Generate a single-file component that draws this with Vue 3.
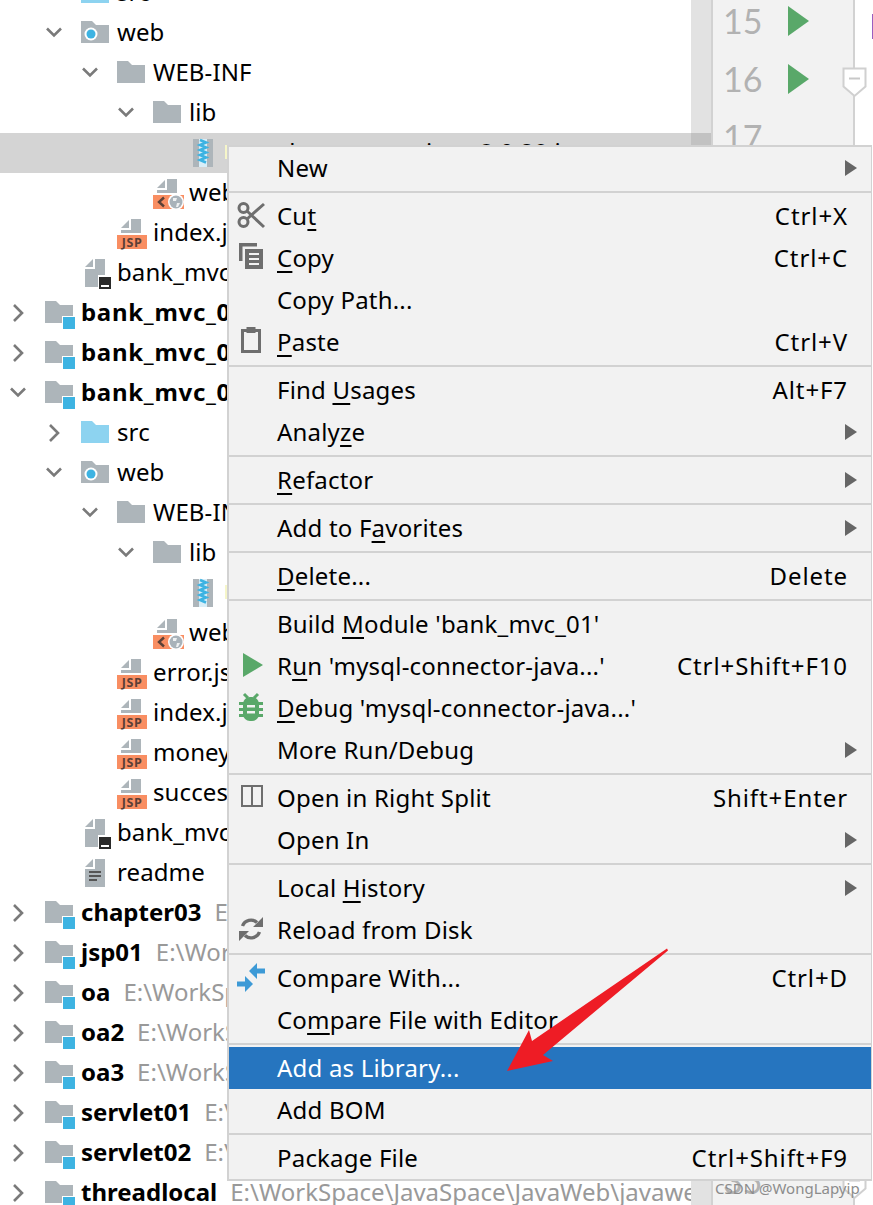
<script setup>
const tree = [
  { lv: 1, chev: 'none', icon: 'src', text: 'src' },
  { lv: 1, chev: 'down', icon: 'web', text: 'web' },
  { lv: 2, chev: 'down', icon: 'folder', text: 'WEB-INF' },
  { lv: 3, chev: 'down', icon: 'folder', text: 'lib' },
  { lv: 4, icon: 'jar', text: 'mysql-connector-java-8.0.29.jar', sel: true, lib: true },
  { lv: 3, icon: 'xml', text: 'web.xml' },
  { lv: 2, icon: 'jsp', text: 'index.jsp' },
  { lv: 1, icon: 'iml', text: 'bank_mvc_01.iml' },
  { lv: 0, chev: 'right', icon: 'project', text: 'bank_mvc_01', bold: true, wide: true },
  { lv: 0, chev: 'right', icon: 'project', text: 'bank_mvc_02', bold: true, wide: true },
  { lv: 0, chev: 'down', icon: 'project', text: 'bank_mvc_03', bold: true, wide: true },
  { lv: 1, chev: 'right', icon: 'src', text: 'src' },
  { lv: 1, chev: 'down', icon: 'web', text: 'web' },
  { lv: 2, chev: 'down', icon: 'folder', text: 'WEB-INF' },
  { lv: 3, chev: 'down', icon: 'folder', text: 'lib' },
  { lv: 4, icon: 'jar', text: 'mysql-connector-java-8.0.29.jar', lib: true },
  { lv: 3, icon: 'xml', text: 'web.xml' },
  { lv: 2, icon: 'jsp', text: 'error.jsp' },
  { lv: 2, icon: 'jsp', text: 'index.jsp' },
  { lv: 2, icon: 'jsp', text: 'money.jsp' },
  { lv: 2, icon: 'jsp', text: 'success.jsp' },
  { lv: 1, icon: 'iml', text: 'bank_mvc_03.iml' },
  { lv: 1, icon: 'readme', text: 'readme' },
  ...['chapter03', 'jsp01', 'oa', 'oa2', 'oa3', 'servlet01', 'servlet02', 'threadlocal'].map((text) => ({
    lv: 0, chev: 'right', icon: 'project', text, bold: true,
    path: 'E:\\WorkSpace\\JavaSpace\\JavaWeb\\javaweb'
  }))
]

const lineNumbers = Array.from({ length: 21 }, (_, i) => i + 15)

const groups = [
  [{ label: 'New', sub: true }],
  [
    { label: 'Cu&t', key: 'Ctrl+X', icon: 'cut' },
    { label: '&Copy', key: 'Ctrl+C', icon: 'copy' },
    { label: 'Copy Path...' },
    { label: '&Paste', key: 'Ctrl+V', icon: 'paste' }
  ],
  [
    { label: 'Find &Usages', key: 'Alt+F7' },
    { label: 'Analy&ze', sub: true }
  ],
  [{ label: '&Refactor', sub: true }],
  [{ label: 'Add to F&avorites', sub: true }],
  [{ label: '&Delete...', key: 'Delete' }],
  [
    { label: "Build &Module 'bank_mvc_01'" },
    { label: "R&un 'mysql-connector-java...'", key: 'Ctrl+Shift+F10', icon: 'run' },
    { label: "&Debug 'mysql-connector-java...'", icon: 'debug' },
    { label: 'More Run/Debug', sub: true }
  ],
  [
    { label: 'Open in Right Split', key: 'Shift+Enter', icon: 'split' },
    { label: 'Open In', sub: true }
  ],
  [
    { label: 'Local &History', sub: true },
    { label: 'Reload from Disk', icon: 'reload' }
  ],
  [
    { label: 'Compare With...', key: 'Ctrl+D', icon: 'compare' },
    { label: 'Co&mpare File with Editor' }
  ],
  [
    { label: 'Add as Library...', active: true },
    { label: 'Add BOM' }
  ],
  [{ label: 'Package File', key: 'Ctrl+Shift+F9' }]
]

function parts(label) {
  const i = label.indexOf('&')
  if (i < 0) return { pre: label, u: '', post: '' }
  return { pre: label.slice(0, i), u: label[i + 1], post: label.slice(i + 2) }
}
</script>

<template>
  <div class="screen">
    <div class="left">
      <div class="tree">
        <div
          v-for="(r, i) in tree"
          :key="i"
          class="row"
          :class="{ sel: r.sel }"
          :style="{ paddingLeft: r.lv * 36 + 'px' }"
        >
          <span class="chev">
            <svg v-if="r.chev === 'down'" width="20" height="14" viewBox="0 0 20 14">
              <path d="M3 2.5 L10 9.5 L17 2.5" />
            </svg>
            <svg v-else-if="r.chev === 'right'" width="14" height="20" viewBox="0 0 14 20">
              <path d="M3 2 L11 10 L3 18" />
            </svg>
          </span>
          <span class="ico">
            <svg width="36" height="40" viewBox="0 0 36 40">
              <template v-if="r.icon === 'project'">
                <path class="g" d="M1 8h11l4 4h13v18H1z" />
                <rect x="18" y="23" width="14" height="14" fill="#fff" />
                <rect x="19" y="24" width="12" height="12" fill="#3db3e2" />
              </template>
              <path v-else-if="r.icon === 'folder'" class="g" d="M1 8h11l4 4h13v18H1z" />
              <path v-else-if="r.icon === 'src'" fill="#8dd3f0" d="M1 8h11l4 4h13v18H1z" />
              <template v-else-if="r.icon === 'web'">
                <path class="g" d="M1 8h11l4 4h13v18H1z" />
                <circle cx="11" cy="21" r="6.5" fill="#fff" />
                <circle cx="11" cy="21" r="4.5" fill="#3db3e2" />
              </template>
              <template v-else-if="r.icon === 'jar'">
                <rect class="g" x="5" y="6" width="20" height="28" />
                <rect x="11" y="6" width="8" height="28" fill="#d8eef8" />
                <path d="M12 7l6 2.5-6 2.5 6 2.5-6 2.5 6 2.5-6 2.5 6 2.5-6 2.5 6 2.5" fill="none" stroke="#3db3e2" stroke-width="2.6" />
              </template>
              <template v-else-if="r.icon === 'xml'">
                <path class="g" d="M5 15l8-8v8zM15 6h10v14H5v-3h10z" />
                <rect x="1" y="22" width="31" height="14" fill="#f98e62" />
                <path d="M12 24.5l-5 4.5 5 4.5" fill="none" stroke="#5b4036" stroke-width="2.4" />
                <circle cx="24" cy="29" r="8" fill="#fff" />
                <circle cx="24" cy="29" r="6.5" fill="#a9b3ba" />
                <path d="M21 25h4l-1 3h-3zM25 30h3l-2 4h-2z" fill="#eef1f2" />
              </template>
              <template v-else-if="r.icon === 'jsp'">
                <path class="g" d="M5 15l8-8v8zM15 6h10v14H5v-3h10z" />
                <rect x="1" y="22" width="30" height="14" fill="#f98e62" />
                <text x="16" y="34" class="jsp" text-anchor="middle">JSP</text>
              </template>
              <template v-else-if="r.icon === 'iml'">
                <path class="g" d="M5 14l8-8v8zM15 6h10v16h-7v12H5V16h10z" />
                <rect x="18" y="23" width="14" height="14" fill="#fff" />
                <rect x="19" y="24" width="12" height="12" fill="#2a2a2a" />
                <rect x="21" y="32" width="8" height="2" fill="#fff" />
              </template>
              <template v-else-if="r.icon === 'readme'">
                <path class="g" d="M5 14l8-8v8zM15 6h10v28H5V16h10z" />
                <path d="M9 18h12v2H9zM9 22h12v2H9zM9 26h8v2H9z" fill="#555" />
              </template>
            </svg>
          </span>
          <span class="name" :class="{ bold: r.bold, lib: r.lib, wide: r.wide }">{{ r.text }}</span>
          <span v-if="r.path" class="path">{{ r.path }}</span>
        </div>
      </div>
      <div class="track">
        <div class="thumb"></div>
      </div>
    </div>

    <div class="gutter">
      <div v-for="n in lineNumbers" :key="n" class="line">
        <span class="num">{{ n }}</span>
        <svg v-if="n === 15 || n === 16" class="play" width="22" height="30" viewBox="0 0 22 30">
          <path d="M0 0L21 15L0 30z" fill="#59a869" />
        </svg>
        <svg v-if="n === 16 || n === 35" class="fold" width="26" height="32" viewBox="0 0 26 32">
          <path d="M1.5 1.5h22v18L12.5 29 1.5 19.5z" fill="#fff" stroke="#d0d0d0" stroke-width="2" />
          <path d="M7 11.5h11" stroke="#c8c8c8" stroke-width="2" />
        </svg>
      </div>
      <div class="wm">CSDN @WongLapyip</div>
    </div>

    <div class="editor"><span class="purple"></span></div>

    <div class="menu">
      <template v-for="(g, gi) in groups" :key="gi">
        <div v-if="gi" class="sep"></div>
        <div v-for="it in g" :key="it.label" class="item" :class="{ active: it.active }">
          <svg v-if="it.icon" class="mi" width="30" height="42" viewBox="0 0 30 42">
            <g v-if="it.icon === 'cut'" fill="none" stroke="#6e6e6e" stroke-width="3">
              <circle cx="7.5" cy="13" r="4.5" />
              <circle cx="7.5" cy="27" r="4.5" />
              <path d="M11 16L28 32M11 24L28 9" />
            </g>
            <g v-else-if="it.icon === 'copy'" fill="#6e6e6e">
              <path d="M3 6h18v3.5H6.5V24H3z" />
              <path fill-rule="evenodd" d="M9 12h18v20H9zM13 16v2h10v-2zM13 21v2h10v-2zM13 26v2h10v-2z" />
            </g>
            <g v-else-if="it.icon === 'paste'" fill="#6e6e6e">
              <rect x="6.5" y="9.5" width="17" height="21" fill="none" stroke="#6e6e6e" stroke-width="3" />
              <rect x="10.5" y="6" width="9" height="6" />
            </g>
            <path v-else-if="it.icon === 'run'" d="M7 8L27 20L7 32z" fill="#59a869" />
            <g v-else-if="it.icon === 'debug'">
              <path d="M8 7l4 4M22 7l-4 4" stroke="#59a869" stroke-width="3" fill="none" />
              <path d="M3 15h5v3H3zM22 15h5v3h-5zM3 21h5v3H3zM22 21h5v3h-5zM3 27h6v3H3zM21 27h6v3h-6z" fill="#59a869" />
              <rect x="7" y="10" width="16" height="24" rx="7" fill="#59a869" />
              <path d="M11 18h8v2.5h-8zM11 24h8v2.5h-8z" fill="#f2f2f2" />
            </g>
            <g v-else-if="it.icon === 'split'" fill="none" stroke="#6e6e6e" stroke-width="2">
              <rect x="6" y="9" width="20" height="20" />
              <path d="M16 9v20" />
            </g>
            <g v-else-if="it.icon === 'reload'">
              <path d="M6.5 17A9 9 0 0 1 21 13.5M23.5 23A9 9 0 0 1 9 26.5" fill="none" stroke="#6e6e6e" stroke-width="3.4" />
              <path d="M27 8v10h-10zM3 32V22h10z" fill="#6e6e6e" />
            </g>
            <g v-else-if="it.icon === 'compare'" fill="#3d9ad6">
              <path d="M13 14l8-8v5.5h8v5h-8V22z" />
              <path d="M17 27l-8-8v5.5H1v5h8V35z" />
            </g>
          </svg>
          <span class="lbl">{{ parts(it.label).pre }}<u v-if="parts(it.label).u">{{ parts(it.label).u }}</u>{{ parts(it.label).post }}</span>
          <span v-if="it.key" class="key">{{ it.key }}</span>
          <svg v-if="it.sub" class="sub" width="12" height="16" viewBox="0 0 12 16">
            <path d="M0 0L12 8L0 16z" fill="#666" />
          </svg>
        </div>
      </template>
    </div>

    <svg class="arrow" width="873" height="1205" viewBox="0 0 873 1205">
      <path d="M667 948.5L668 950.5L543 1055L553 1061L507 1071L529 1030L532 1041z" fill="#ee1c25" />
    </svg>
  </div>
</template>

<style>
html, body { margin: 0; background: #fff; }
</style>

<style scoped>
.screen {
  position: relative;
  display: flex;
  width: 873px;
  height: 1205px;
  overflow: hidden;
  background: #fff;
  font-family: "Noto Sans", "Open Sans", sans-serif;
  font-size: 24px;
  color: #000;
}
.left {
  flex: none;
  display: flex;
  width: 711px;
  overflow: hidden;
}
.tree {
  flex: none;
  width: 691px;
  margin-top: -27px;
}
.row {
  display: flex;
  align-items: center;
  height: 40px;
  white-space: nowrap;
}
.row.sel { background: #d4d4d4; }
.chev {
  flex: none;
  display: flex;
  align-items: center;
  justify-content: center;
  width: 36px;
  margin-right: 8px;
}
.chev svg path {
  fill: none;
  stroke: #7a7a7a;
  stroke-width: 2.6;
}
.ico {
  flex: none;
  display: flex;
  width: 37px;
  height: 40px;
}
.g { fill: #adb5ba; }
.jsp {
  font-family: "Open Sans", sans-serif;
  font-weight: 700;
  font-size: 12.5px;
  letter-spacing: 0.6px;
  fill: #5b4036;
}
.name {
  flex: none;
  padding-bottom: 4px;
  letter-spacing: 0.1px;
}
.name.bold { font-weight: 700; letter-spacing: 0; }
.name.bold.wide { letter-spacing: 0.7px; }
.name.lib {
  padding-left: 3px;
  background: linear-gradient(to bottom, transparent 10px, #f6f6c9 10px, #f6f6c9 24px, transparent 24px) no-repeat 0 0 / 3px 100%;
}
.path {
  flex: none;
  margin-left: 13px;
  padding-bottom: 4px;
  color: #999;
}
.track {
  flex: none;
  width: 20px;
  height: 1205px;
  padding-top: 133px;
  box-sizing: border-box;
  background: #e2e2e2;
}
.thumb {
  height: 40px;
  background: #c2c2c2;
}
.gutter {
  flex: none;
  position: relative;
  width: 144px;
  height: 1205px;
  box-sizing: border-box;
  padding-top: 1px;
  background: #f2f2f2;
  border-left: 2px solid #d2d2d2;
  border-right: 2px solid #d2d2d2;
  font-family: Lato, sans-serif;
  color: #b2b2b2;
}
.gutter .line:first-child { margin-top: -10px; }
.line {
  position: relative;
  display: flex;
  align-items: center;
  height: 58px;
  padding-left: 10px;
  font-size: 34px;
}
.num { width: 65px; }
.play { flex: none; margin-top: 1px; }
.fold {
  position: absolute;
  left: 129px;
  top: 18px;
}
.wm {
  position: absolute;
  left: 2px;
  bottom: 7px;
  font-family: "Noto Sans", sans-serif;
  font-size: 15px;
  line-height: 20px;
  white-space: nowrap;
  color: #8c8c8c;
}
.editor {
  flex: 1;
  position: relative;
}
.purple {
  position: absolute;
  right: 0;
  top: 14px;
  width: 1px;
  height: 25px;
  background: #9a5fc0;
}
.menu {
  position: absolute;
  left: 227px;
  top: 145px;
  width: 645px;
  box-sizing: border-box;
  background: #f2f2f2;
  border: solid #d2d2d2;
  border-width: 2px 1px 2px 2px;
}
.sep {
  height: 2px;
  margin: 2px 0;
  background: #d2d2d2;
}
.item {
  position: relative;
  display: flex;
  align-items: center;
  justify-content: space-between;
  height: 42px;
  padding: 0 23px 0 48px;
  white-space: nowrap;
}
.item.active {
  background: #2675bf;
  color: #fff;
}
.mi {
  position: absolute;
  left: 7px;
  top: 0;
}
.lbl {
  padding-bottom: 2px;
  letter-spacing: 0.2px;
}
.lbl u {
  text-decoration-thickness: 2px;
  text-underline-offset: 4px;
  text-decoration-skip-ink: none;
}
.key {
  padding-bottom: 2px;
  letter-spacing: 0.9px;
}
.sub {
  position: absolute;
  right: 14px;
  top: 13px;
}
.arrow {
  position: absolute;
  left: 0;
  top: 0;
  pointer-events: none;
}
</style>
